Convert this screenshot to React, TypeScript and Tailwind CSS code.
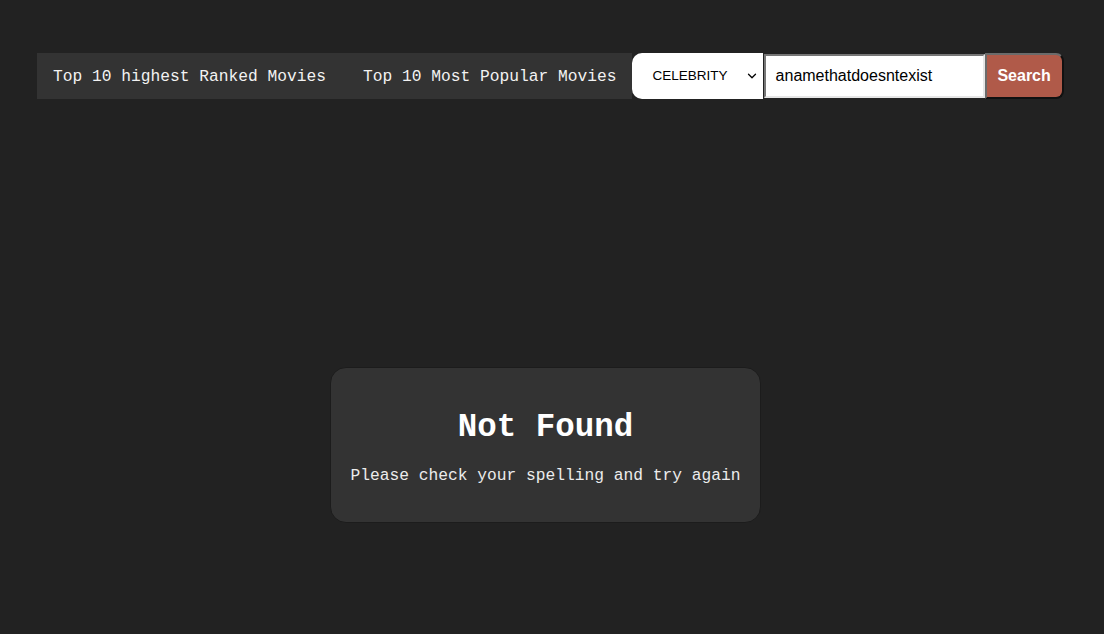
import { ChevronDown } from 'lucide-react';

const mono = { fontFamily: '"Liberation Mono", "Courier New", monospace' };
const sans = { fontFamily: '"Liberation Sans", Arial, sans-serif' };

export default function App() {
  return (
    <div className="min-h-[634px] w-full bg-[#222222] text-white">
      {/* top bar */}
      <div className="flex pl-[37px] pt-[53px]">
        <nav className="flex h-[46px] items-center bg-[#333333] pl-4 pr-[15px] pt-[2px] text-[16.25px] text-[#f2f2f2]" style={mono}>
          <a className="whitespace-pre">Top 10 highest Ranked Movies</a>
          <a className="ml-[37px] whitespace-pre">Top 10 Most Popular Movies</a>
        </nav>
        <form className="flex h-[46px] items-stretch" onSubmit={(e) => e.preventDefault()}>
          <div className="relative flex w-[131px] items-center rounded-l-[10px] bg-white pl-[21px] text-[13.5px] text-black" style={sans}>
            CELEBRITY
            <ChevronDown className="absolute right-[4px] top-[16px] h-[14px] w-[14px]" strokeWidth={2.2} />
          </div>
          <div className="my-[1px] ml-px flex w-[221px] items-center border-2 border-b-[#e6e6e6] border-l-[#767676] border-r-[#e6e6e6] border-t-[#767676] bg-white pl-[10px] text-[16px] text-black" style={sans}>
            anamethatdoesntexist
          </div>
          <button
            type="submit"
            className="flex w-[79px] items-center justify-center rounded-r-[8px] border-2 border-b-[#111] border-l-[#6b6b6b] border-r-[#111] border-t-[#6b6b6b] bg-[#b05a49] text-[16px] font-bold text-white"
            style={sans}
          >
            Search
          </button>
        </form>
      </div>

      {/* result */}
      <div className="flex justify-center pr-[13px] pt-[268px]">
        <div className="flex w-[431px] flex-col items-center rounded-[16px] border border-[#1c1c1c] bg-[#333333] pb-[37px] pt-[41px]" style={mono}>
          <h2 className="text-[32.5px] font-bold leading-[37px] text-white">Not Found</h2>
          <p className="mt-[21px] text-[16.25px] leading-[18px] text-[#ececec]">Please check your spelling and try again</p>
        </div>
      </div>
    </div>
  );
}
